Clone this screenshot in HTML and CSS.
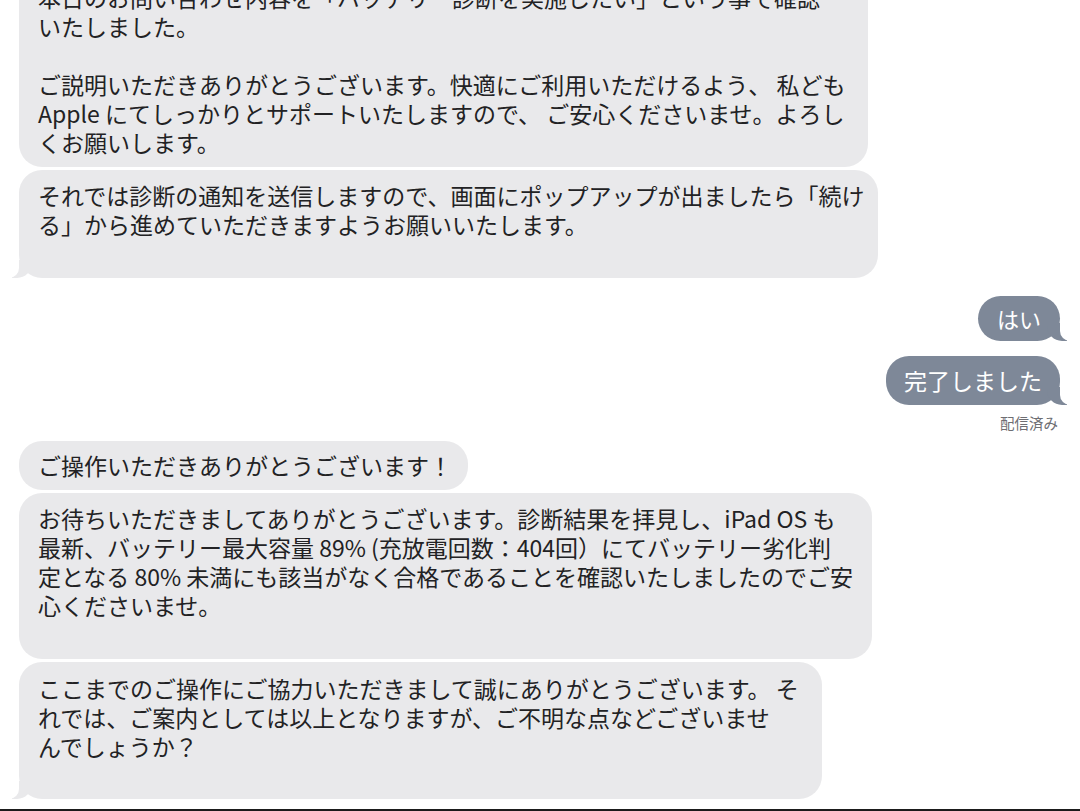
FILE: index.html
```html
<!DOCTYPE html>
<html lang="ja">
<head>
<meta charset="utf-8">
<link rel="stylesheet" href="styles.css">
</head>
<body>
<div class="chat">
  <div class="bubble recv b1">本日のお問い合わせ内容を「バッテリー診断を実施したい」という事で確認<br>いたしました。<br>&nbsp;<br>ご説明いただきありがとうございます。快適にご利用いただけるよう、 私ども<br>Apple にてしっかりとサポートいたしますので、 ご安心くださいませ。よろし<br>くお願いします。</div>
  <div class="bubble recv b2 tail-left">それでは診断の通知を送信しますので、画面にポップアップが出ましたら「続け<br>る」から進めていただきますようお願いいたします。<br>&nbsp;</div>

  <div class="bubble sent s1 tail-right">はい</div>
  <div class="bubble sent s2 tail-right">完了しました</div>
  <div class="status">配信済み</div>

  <div class="bubble recv b3">ご操作いただきありがとうございます！</div>
  <div class="bubble recv b4">お待ちいただきましてありがとうございます。診断結果を拝見し、iPad OS も<br>最新、バッテリー最大容量 89% (充放電回数：404回）にてバッテリー劣化判<br>定となる 80% 未満にも該当がなく合格であることを確認いたしましたのでご安<br>心くださいませ。<br>&nbsp;</div>
  <div class="bubble recv b5 tail-left">ここまでのご操作にご協力いただきまして誠にありがとうございます。 そ<br>れでは、ご案内としては以上となりますが、ご不明な点などございませ<br>んでしょうか？<br>&nbsp;</div>
  <div class="bottom-bar"></div>
</div>
</body>
</html>
```

FILE: styles.css
```css
html, body {
  margin: 0;
  padding: 0;
  background: #ffffff;
  overflow: hidden;
}

body {
  width: 1080px;
  height: 811px;
  font-family: "Noto Sans CJK JP", "Noto Sans", sans-serif;
}

.chat {
  display: flex;
  flex-direction: column;
}

.bubble {
  position: relative;
  box-sizing: border-box;
  font-size: 23px;
  line-height: 29px;
  white-space: nowrap;
  border-radius: 23px;
}

.recv {
  align-self: flex-start;
  margin-left: 19px;
  background: #e9e9eb;
  color: #222224;
  padding: 10px 19px;
}

.b1 { width: 849px; margin-top: -27px; }
.b2 { width: 859px; margin-top: 3px; padding-top: 11px; }
.b3 { width: 449px; margin-top: 8px; padding: 10px 19px; }
.b4 { width: 853px; margin-top: 3px; padding-top: 11px; }
.b5 { width: 803px; margin-top: 3px; padding-top: 12px; padding-bottom: 9px; }

.sent {
  align-self: flex-end;
  margin-right: 20px;
  background: #7e8898;
  color: #ffffff;
  padding: 8px 0;
  text-align: center;
}

.s1 { margin-top: 18px; width: 82px; font-size: 22px; }
.s2 { margin-top: 15px; width: 174px; padding-top: 10px; padding-bottom: 10px; font-size: 23px; }

.status {
  align-self: flex-end;
  margin-right: 22px;
  margin-top: 8px;
  font-size: 14.5px;
  line-height: 20px;
  color: #6e6e73;
}

/* tails */
.tail-left::before {
  content: "";
  position: absolute;
  left: -7px;
  bottom: 0;
  width: 20px;
  height: 18px;
  background: #e9e9eb;
  border-bottom-right-radius: 15px;
}
.tail-left::after {
  content: "";
  position: absolute;
  left: -10px;
  bottom: 0;
  width: 10px;
  height: 18px;
  background: #ffffff;
  border-bottom-right-radius: 10px;
}

.tail-right::before {
  content: "";
  position: absolute;
  right: -7px;
  bottom: 0;
  width: 20px;
  height: 18px;
  background: #7e8898;
  border-bottom-left-radius: 15px;
}
.tail-right::after {
  content: "";
  position: absolute;
  right: -10px;
  bottom: 0;
  width: 10px;
  height: 18px;
  background: #ffffff;
  border-bottom-left-radius: 10px;
}

.bottom-bar {
  margin-top: 10px;
  height: 3px;
  background: #1b1b1b;
}
```
